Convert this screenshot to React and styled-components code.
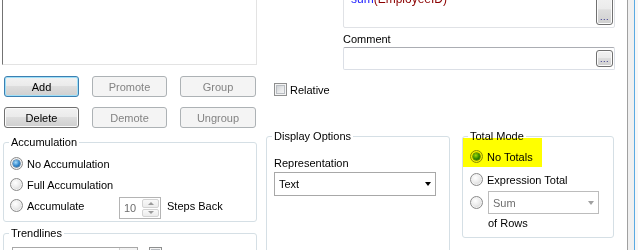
import React from "react";
import styled, { createGlobalStyle, css } from "styled-components";

const GlobalStyle = createGlobalStyle`
  *, *::before, *::after { box-sizing: border-box; }
  body {
    margin: 0;
    background: #fff;
    color: #000;
    font-family: "Liberation Sans", Arial, sans-serif;
    font-size: 11px;
  }
`;

const Window = styled.div`
  display: flex;
  width: 638px;
  height: 250px;
  overflow: hidden;
  background: #fff;
`;

const Pane = styled.div`
  display: flex;
  width: 627px;
  flex: none;
`;

const PaneEdge = styled.div`
  width: 11px;
  flex: none;
  border-left: 1px solid #a0a0a0;
  background: linear-gradient(to right, #f0f0f0 0 6px, #5aaae2 6px 7px, #f7f7f7 7px);
`;

const LeftCol = styled.div`
  width: 258px;
  flex: none;
  display: flex;
  flex-direction: column;
  padding-left: 2px;
`;

const RightCol = styled.div`
  flex: 1;
  display: flex;
  flex-direction: column;
`;

const ListBox = styled.div`
  width: 255px;
  height: 69px;
  margin-top: -4px;
  flex: none;
  background: #fff;
  border-left: 1px solid #737373;
  border-right: 1px solid #e3e3e3;
  border-bottom: 1px solid #e3e3e3;
`;

const ButtonRow = styled.div`
  display: flex;
  gap: 13px;
  padding-left: 2px;
  margin-top: ${p => p.$mt}px;
`;

const PushButton = styled.button`
  width: ${p => p.$w || 75}px;
  height: 21px;
  flex: none;
  padding: 0;
  display: flex;
  align-items: center;
  justify-content: center;
  border-radius: 3px;
  font: inherit;
  ${p => p.$disabled ? css`
    border: 1px solid #adb2b5;
    background: #f4f4f4;
    color: #838383;
  ` : css`
    border: 1px solid ${p.$default ? "#3c7fb1" : "#707070"};
    background: linear-gradient(#f2f2f2 0%, #ebebeb 45%, #dddddd 50%, #cfcfcf 100%);
    box-shadow: inset 0 0 0 1px ${p.$default ? "#9fe0f8" : "#fbfbfb"};
    color: #000;
  `}
`;

const Group = styled.div`
  position: relative;
  width: ${p => p.$w}px;
  height: ${p => p.$h}px;
  flex: none;
  margin: ${p => p.$m || "0"};
  border: 1px solid #d5dfe5;
  border-radius: 3px;
  display: flex;
  flex-direction: column;
`;

const Legend = styled.div`
  align-self: flex-start;
  height: 13px;
  line-height: 13px;
  margin: -7px 0 0 5px;
  padding: 0 2px;
  background: #fff;
`;

const GroupBody = styled.div`
  display: flex;
  flex-direction: column;
  padding-left: ${p => p.$pl}px;
  margin-top: ${p => p.$mt || 0}px;
`;

const Highlight = styled.div`
  position: absolute;
  left: 0;
  top: 1px;
  width: 79px;
  height: 29px;
  background: #ffff00;
  mix-blend-mode: multiply;
  pointer-events: none;
`;

const OptionRow = styled.div`
  display: flex;
  align-items: center;
  gap: ${p => p.$gap || 4}px;
  height: ${p => p.$h || 21}px;
`;

const Label = styled.span`
  line-height: 14px;
  white-space: nowrap;
  width: ${p => (p.$w ? `${p.$w}px` : "auto")};
  margin-top: ${p => p.$mt || 0}px;
  margin-left: ${p => p.$ml || 0}px;
  flex: none;
`;

const Radio = styled.span`
  width: 13px;
  height: 13px;
  flex: none;
  border-radius: 50%;
  border: 1px solid #8b8b8b;
  background: radial-gradient(circle at 40% 35%, #ffffff 0%, #ececec 45%, #c4c4c4 100%);
  box-shadow: inset 0 0 0 1px #f3f3f3;
  display: flex;
  align-items: center;
  justify-content: center;

  &::after {
    content: "";
    width: 7px;
    height: 7px;
    border-radius: 50%;
    display: ${p => (p.$checked ? "block" : "none")};
    background: radial-gradient(circle at 40% 35%, #a6dcfb 0%, #2f86cc 55%, #0d4c86 100%);
    box-shadow: 0 0 0 0.5px #1b4f7e;
  }
`;

const Check = styled.span`
  width: 13px;
  height: 13px;
  flex: none;
  border: 1px solid #8e8f8f;
  background: linear-gradient(135deg, #c4c8cc 0%, #e8e9ea 55%, #fafafa 100%);
  box-shadow: inset 0 0 0 1px #f4f4f4, inset 0 0 0 2px #b9bdc2;
`;

const Spinner = styled.div`
  width: 42px;
  height: 22px;
  flex: none;
  align-self: flex-start;
  margin-top: 2px;
  display: flex;
  border: 1px solid #b4b4b4;
  background: #fff;
`;

const SpinValue = styled.span`
  flex: 1;
  padding-left: 4px;
  display: flex;
  align-items: center;
  color: #6d6d6d;
`;

const SpinButtons = styled.div`
  width: 18px;
  display: flex;
  flex-direction: column;
  gap: 1px;
  padding: 1px 1px 1px 0;
`;

const SpinButton = styled.div`
  flex: 1;
  display: flex;
  align-items: center;
  justify-content: center;
  border: 1px solid #d3d3d3;
  border-radius: 2px;
  background: linear-gradient(#f9f9f9, #ececec);
`;

const Tri = styled.span`
  width: 0;
  height: 0;
  border-left: ${p => p.$s || 3}px solid transparent;
  border-right: ${p => p.$s || 3}px solid transparent;
  ${p => (p.$up ? "border-bottom" : "border-top")}: ${p => (p.$s ? p.$s + 1 : 3)}px solid ${p => p.$c || "#9a9a9a"};
`;

const Combo = styled.div`
  width: ${p => p.$w}px;
  height: ${p => p.$h}px;
  flex: none;
  margin-top: ${p => p.$mt || 0}px;
  display: flex;
  align-items: center;
  justify-content: space-between;
  padding: 0 4px;
  border: 1px solid ${p => (p.$disabled ? "#bcbcbc" : "#a8a8a8")};
  background: #fff;
  color: ${p => (p.$disabled ? "#6d6d6d" : "#000")};
`;

const ComboButton = styled.div`
  width: 18px;
  align-self: stretch;
  margin-right: -4px;
  border-left: 1px solid #d0d0d0;
  background: linear-gradient(#f4f4f4, #e2e2e2);
`;

const FieldStack = styled.div`
  display: flex;
  flex-direction: column;
  padding-left: 85px;
`;

const ExprBox = styled.div`
  width: 272px;
  height: 48px;
  margin-top: -20px;
  display: flex;
  justify-content: space-between;
  align-items: flex-end;
  padding: 11px 1px 2px 7px;
  border: 1px solid #e0e2e6;
  border-radius: 2px;
  background: #fff;
`;

const ExprText = styled.span`
  align-self: flex-start;
  font-size: 12px;
  line-height: 14px;
`;

const Fn = styled.span`
  color: ${p => p.$c};
`;

const CommentBox = styled.div`
  width: 272px;
  height: 23px;
  margin-top: 1px;
  display: flex;
  align-items: center;
  justify-content: flex-end;
  padding-right: 1px;
  border: 1px solid #dbdfe6;
  border-top-color: #abadb3;
  border-radius: 2px;
  background: #fff;
`;

const DotsButton = styled.div`
  width: 17px;
  height: ${p => p.$h}px;
  flex: none;
  display: flex;
  align-items: flex-end;
  justify-content: center;
  padding-bottom: 3px;
  border: 1px solid #707070;
  border-radius: 3px;
  background: linear-gradient(#f2f2f2 0%, #ebebeb 45%, #dddddd 50%, #cfcfcf 100%);
  box-shadow: inset 0 0 0 1px #fbfbfb;
  color: #1a1a80;
  font-size: 9px;
  line-height: 8px;
  letter-spacing: 0.5px;
`;

const CheckRow = styled.div`
  display: flex;
  align-items: center;
  gap: ${p => p.$gap || 3}px;
  height: 13px;
  margin-top: ${p => p.$mt || 0}px;
  padding-left: ${p => p.$pl || 0}px;
`;

const GroupRow = styled.div`
  display: flex;
  gap: 12px;
  margin-top: 40px;
  padding-left: 8px;
`;

const TrendRow = styled.div`
  display: flex;
  align-items: flex-start;
  gap: 11px;
  margin-top: 7px;
  padding-left: 8px;
`;

export default function App() {
  return (
    <>
      <GlobalStyle />
      <Window>
        <Pane>
          <LeftCol>
            <ListBox />
            <ButtonRow $mt={11}>
              <PushButton $default>Add</PushButton>
              <PushButton $disabled>Promote</PushButton>
              <PushButton $disabled $w={76}>Group</PushButton>
            </ButtonRow>
            <ButtonRow $mt={10}>
              <PushButton>Delete</PushButton>
              <PushButton $disabled>Demote</PushButton>
              <PushButton $disabled $w={76}>Ungroup</PushButton>
            </ButtonRow>

            <Group $w={254} $h={80} $m="14px 0 0 1px">
              <Legend>Accumulation</Legend>
              <GroupBody $pl={6} $mt={4}>
                <OptionRow>
                  <Radio $checked />
                  <Label>No Accumulation</Label>
                </OptionRow>
                <OptionRow>
                  <Radio />
                  <Label>Full Accumulation</Label>
                </OptionRow>
                <OptionRow>
                  <Radio />
                  <Label $w={88}>Accumulate</Label>
                  <Spinner>
                    <SpinValue>10</SpinValue>
                    <SpinButtons>
                      <SpinButton><Tri $up /></SpinButton>
                      <SpinButton><Tri /></SpinButton>
                    </SpinButtons>
                  </Spinner>
                  <Label $ml={2}>Steps Back</Label>
                </OptionRow>
              </GroupBody>
            </Group>

            <Group $w={254} $h={60} $m="11px 0 0 1px">
              <Legend>Trendlines</Legend>
              <TrendRow>
                <Combo $w={126} $h={22}>
                  <span />
                  <ComboButton />
                </Combo>
                <CheckRow $gap={4}>
                  <Check />
                  <Label>Show Equation</Label>
                </CheckRow>
              </TrendRow>
            </Group>
          </LeftCol>

          <RightCol>
            <FieldStack>
              <ExprBox>
                <ExprText>
                  <Fn $c="#2020ff">sum</Fn>
                  <Fn $c="#8b0000">(EmployeeID)</Fn>
                </ExprText>
                <DotsButton $h={30}>...</DotsButton>
              </ExprBox>
              <Label $mt={4}>Comment</Label>
              <CommentBox>
                <DotsButton $h={17}>...</DotsButton>
              </CommentBox>
            </FieldStack>

            <CheckRow $mt={13} $pl={16}>
              <Check />
              <Label>Relative</Label>
            </CheckRow>

            <GroupRow>
              <Group $w={184} $h={140}>
                <Legend>Display Options</Legend>
                <GroupBody $pl={7}>
                  <Label $mt={13}>Representation</Label>
                  <Combo $w={162} $h={24} $mt={2}>
                    <span>Text</span>
                    <Tri $s={3.5} $c="#000" />
                  </Combo>
                </GroupBody>
              </Group>

              <Group $w={152} $h={102}>
                <Legend>Total Mode</Legend>
                <GroupBody $pl={7} $mt={2}>
                  <OptionRow $h={23}>
                    <Radio $checked />
                    <Label>No Totals</Label>
                  </OptionRow>
                  <OptionRow $h={23}>
                    <Radio />
                    <Label>Expression Total</Label>
                  </OptionRow>
                  <OptionRow $h={23} $gap={5}>
                    <Radio />
                    <Combo $w={111} $h={23} $disabled>
                      <span>Sum</span>
                      <Tri $s={3.5} $c="#a0a0a0" />
                    </Combo>
                  </OptionRow>
                  <Label $mt={2} $ml={18}>of Rows</Label>
                </GroupBody>
                <Highlight />
              </Group>
            </GroupRow>
          </RightCol>
        </Pane>
        <PaneEdge />
      </Window>
    </>
  );
}
